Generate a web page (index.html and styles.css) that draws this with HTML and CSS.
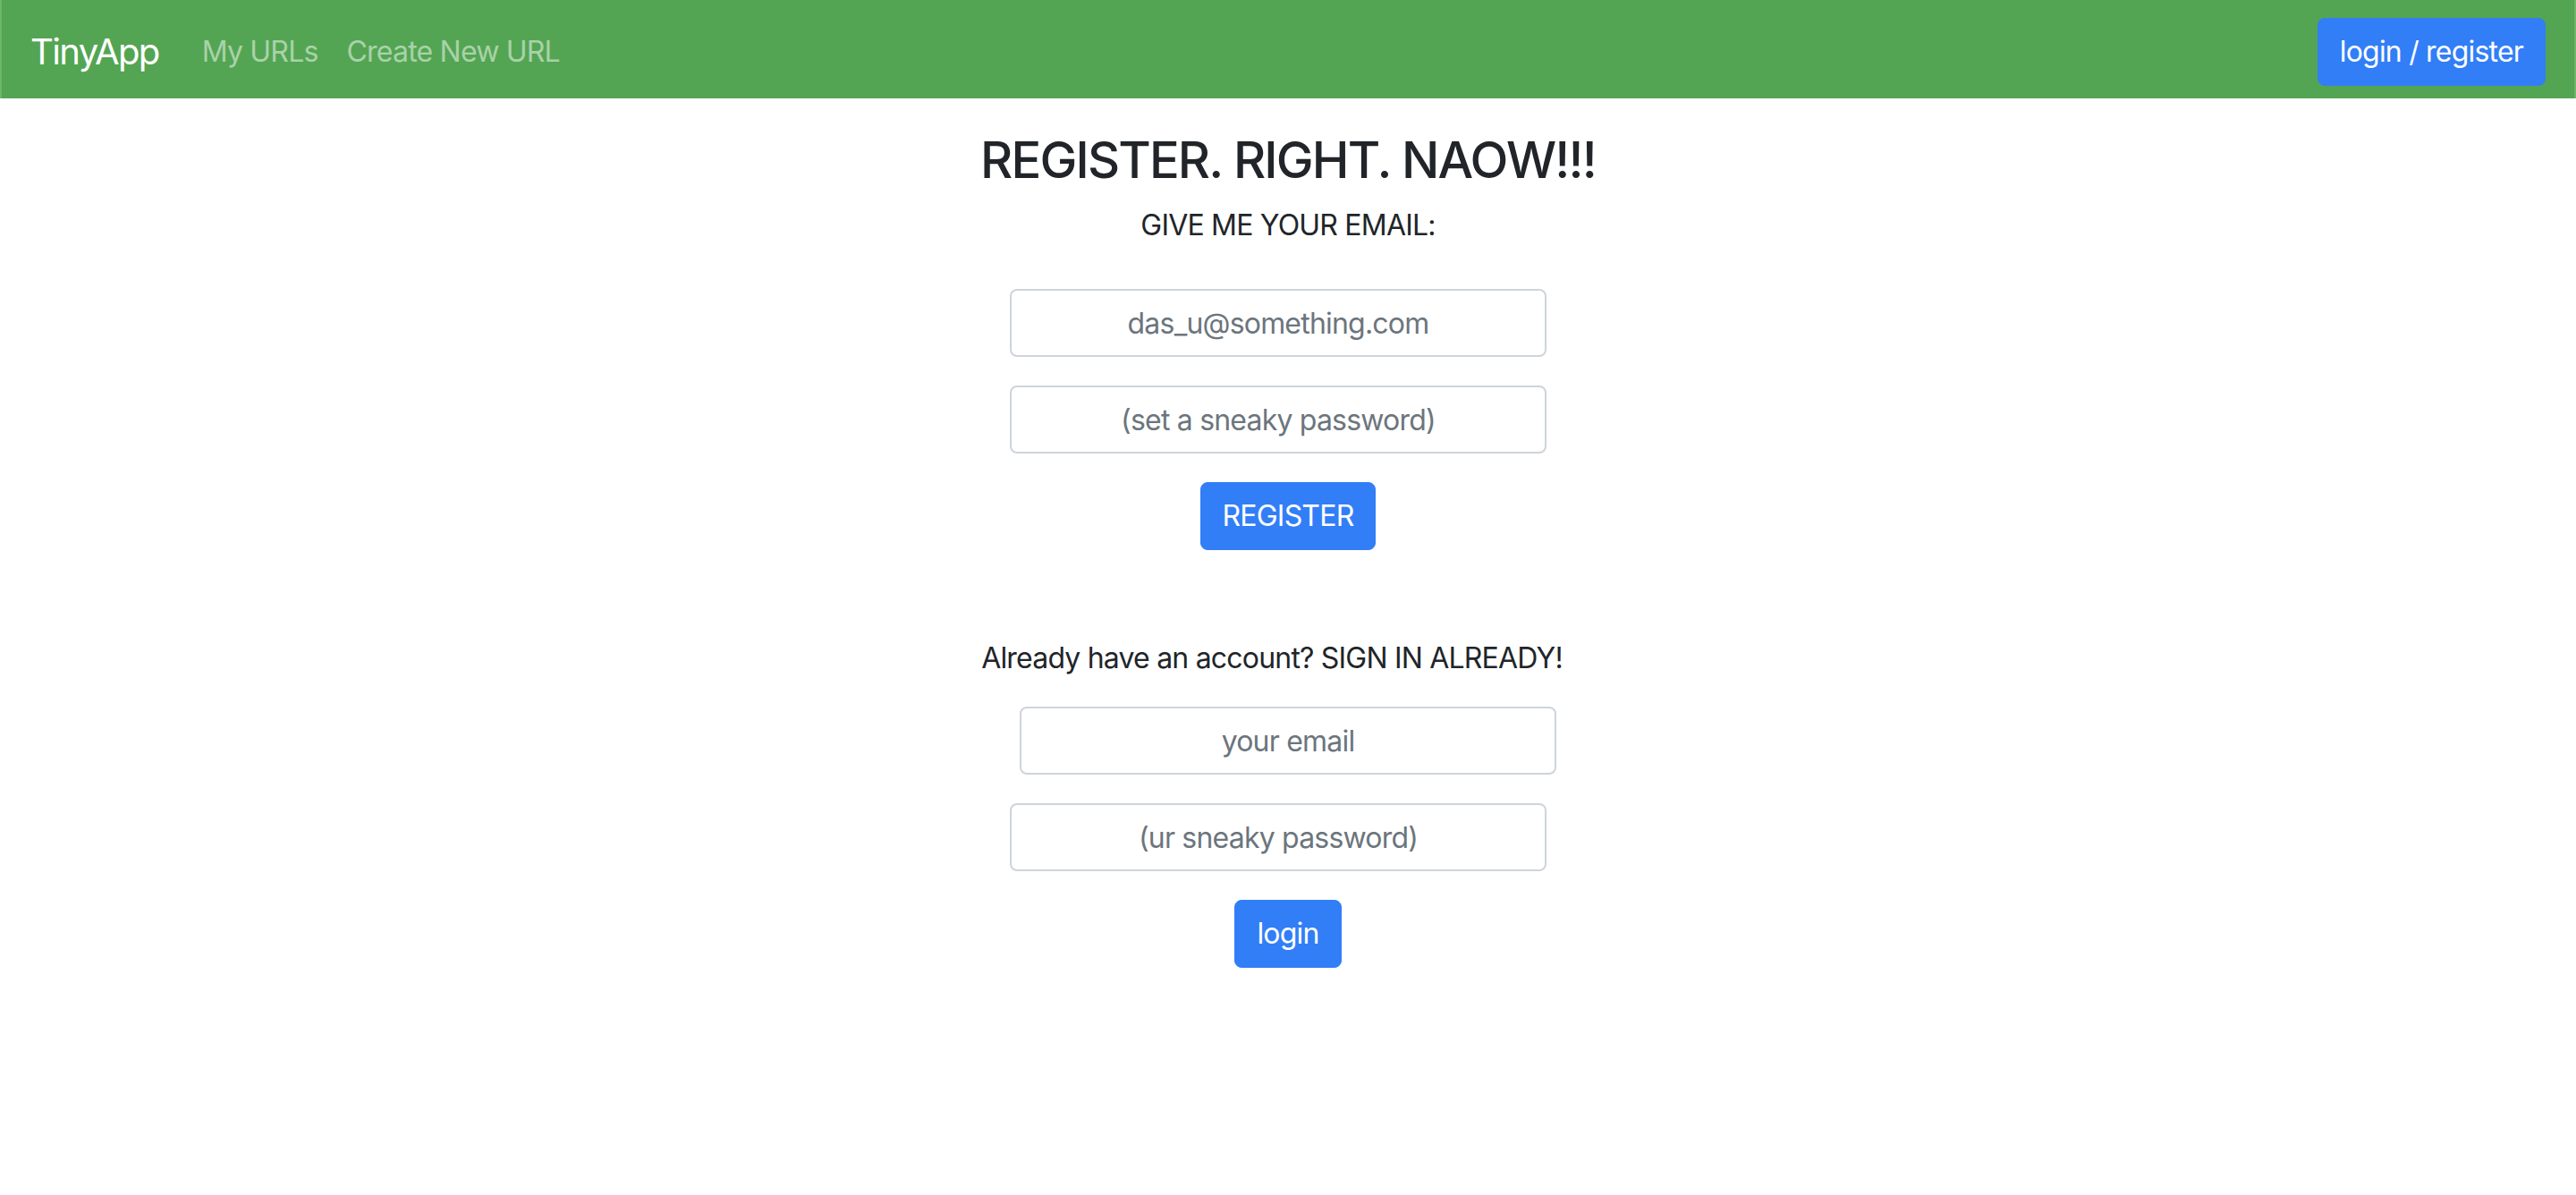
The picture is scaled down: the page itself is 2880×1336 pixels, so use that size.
FILE: index.html
```html
<!DOCTYPE html>
<html lang="en">
<head>
<meta charset="utf-8">
<title>TinyApp - Register</title>
<link rel="stylesheet" href="styles.css">
</head>
<body>
<nav class="navbar">
  <a class="brand" href="#">TinyApp</a>
  <ul class="nav-links">
    <li><a class="nav-link" href="#">My URLs</a></li>
    <li><a class="nav-link" href="#">Create New URL</a></li>
  </ul>
  <a class="btn nav-btn" href="#">login / register</a>
</nav>
<main class="content">
  <h1 class="title">REGISTER. RIGHT. NAOW!!!</h1>
  <p class="prompt">GIVE ME YOUR EMAIL:</p>
  <form class="auth-form">
    <input class="field field-offset" type="email" placeholder="das_u@something.com">
    <input class="field field-offset" type="password" placeholder="(set a sneaky password)">
    <button class="btn" type="button">REGISTER</button>
  </form>
  <p class="prompt prompt-signin">Already have an account? SIGN IN ALREADY!</p>
  <form class="auth-form">
    <input class="field" type="email" placeholder="your email">
    <input class="field field-offset" type="password" placeholder="(ur sneaky password)">
    <button class="btn" type="button">login</button>
  </form>
</main>
</body>
</html>
```

FILE: styles.css
```css
* {
  box-sizing: border-box;
}

body {
  margin: 0;
  font-family: Inter, "Liberation Sans", sans-serif;
  font-size: 32px;
  line-height: 1.5;
  letter-spacing: -0.025em;
  color: #212529;
  background: #ffffff;
}

.navbar {
  display: flex;
  align-items: center;
  height: 110px;
  padding: 5px 32px 0;
  background: #53a553;
  border-left: 2px solid #6db56d;
  border-right: 2px solid #6db56d;
}

.brand {
  font-size: 40px;
  line-height: 1.5;
  letter-spacing: -0.04em;
  color: #ffffff;
  text-decoration: none;
  margin-right: 32px;
}

.nav-links {
  display: flex;
  list-style: none;
  margin: 0;
  padding: 0;
}

.nav-link {
  display: block;
  padding: 0 16px;
  color: rgba(255, 255, 255, 0.5);
  text-decoration: none;
}

.btn {
  display: inline-block;
  height: 76px;
  padding: 0 24px;
  font-family: inherit;
  font-size: 32px;
  line-height: 74px;
  letter-spacing: inherit;
  color: #ffffff;
  background: #327ef7;
  border: 1px solid #327ef7;
  border-radius: 8px;
  text-decoration: none;
  cursor: pointer;
}

.nav-btn {
  margin-left: auto;
}

.content {
  display: flex;
  flex-direction: column;
  align-items: center;
  text-align: center;
}

.title {
  margin: 36px 0 0;
  font-size: 56px;
  font-weight: 500;
  line-height: 1.2;
  letter-spacing: -0.033em;
}

.prompt {
  margin: 15px 0 0;
}

.prompt-signin {
  margin-top: 97px;
  margin-right: 36px;
}

.auth-form {
  display: flex;
  flex-direction: column;
  align-items: center;
  gap: 32px;
  margin-top: 47px;
}

.prompt-signin + .auth-form {
  margin-top: 30px;
}

.field {
  display: block;
  width: 600px;
  height: 76px;
  padding: 0 24px;
  font-family: inherit;
  font-size: 32px;
  letter-spacing: inherit;
  color: #495057;
  text-align: center;
  background: #ffffff;
  border: 2px solid #ced4da;
  border-radius: 8px;
}

.field::placeholder {
  color: #6c757d;
  opacity: 1;
}

.field-offset {
  margin-right: 22px;
}
```
